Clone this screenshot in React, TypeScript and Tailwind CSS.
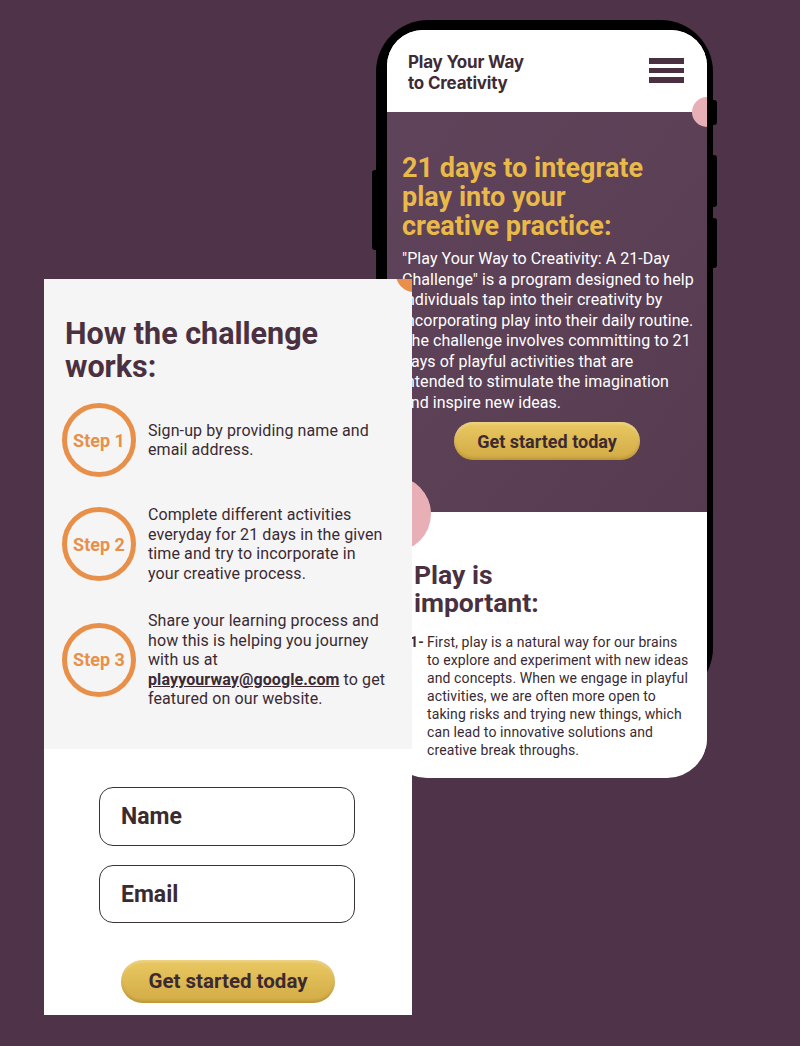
import { Fragment, useState } from 'react';

const steps = [
  {
    label: 'Step 1',
    text: <>Sign-up by providing name and email address.</>,
  },
  {
    label: 'Step 2',
    text: <>Complete different activities everyday for 21 days in the given time and try to incorporate in your creative process.</>,
  },
  {
    label: 'Step 3',
    text: (
      <>
        Share your learning process and how this is helping you journey with us at{' '}
        <span className="font-bold underline underline-offset-1">playyourway@google.com</span> to get featured on our website.
      </>
    ),
  },
];

// 按设计稿断行
const introLines = [
  '"Play Your Way to Creativity: A 21-Day',
  'Challenge" is a program designed to help',
  'individuals tap into their creativity by',
  'incorporating play into their daily routine.',
  'The challenge involves committing to 21',
  'days of playful activities that are',
  'intended to stimulate the imagination',
  'and inspire new ideas.',
];

const playLines = [
  'First, play is a natural way for our brains',
  'to explore and experiment with new ideas',
  'and concepts. When we engage in playful',
  'activities, we are often more open to',
  'taking risks and trying new things, which',
  'can lead to innovative solutions and',
  'creative break throughs.',
];

const withBreaks = (lines: string[]) =>
  lines.map((line, i) => (
    <Fragment key={i}>
      {line}
      {i < lines.length - 1 && <br />}
    </Fragment>
  ));

const CtaButton = ({ className }: { className: string }) => (
  <button
    className={`rounded-full bg-gradient-to-b from-[#e9c862] to-[#d2ab45] font-bold text-[#3d2a30] shadow-[inset_0_-2px_3px_rgba(120,80,10,0.25),inset_0_2px_3px_rgba(255,255,255,0.25)] ${className}`}
  >
    Get started today
  </button>
);

const App = () => {
  const [name, setName] = useState('');
  const [email, setEmail] = useState('');

  return (
    <div className="relative w-[800px] h-[1046px] overflow-hidden bg-[#4f3449] font-['Roboto',sans-serif]">
      {/* 手机外框 */}
      <div className="absolute left-[376px] top-[20px] w-[337px] h-[680px] rounded-[52px] bg-black" />
      <div className="absolute left-[372px] top-[170px] w-[6px] h-[80px] rounded-l-[3px] bg-black" />
      <div className="absolute left-[711px] top-[100px] w-[6px] h-[25px] rounded-r-[3px] bg-black" />
      <div className="absolute left-[711px] top-[155px] w-[6px] h-[52px] rounded-r-[3px] bg-black" />
      <div className="absolute left-[711px] top-[218px] w-[6px] h-[50px] rounded-r-[3px] bg-black" />

      {/* 手机屏幕 */}
      <div className="absolute left-[387px] top-[30px] w-[320px] h-[748px] overflow-hidden rounded-t-[36px] rounded-b-[40px] bg-white">
        <div className="flex h-[82px] items-start justify-between bg-white pl-[21px] pr-[23px] pt-[22px]">
          <div className="font-['Inter',sans-serif] text-[17px] font-bold leading-[21px] tracking-[-0.2px] text-[#3f2b36]">
            Play Your Way
            <br />
            to Creativity
          </div>
          <div className="mt-[6px] flex w-[35px] flex-col gap-[4px]">
            <span className="h-[6px] bg-[#4a3040]" />
            <span className="h-[5px] bg-[#4a3040]" />
            <span className="h-[6px] bg-[#4a3040]" />
          </div>
        </div>

        <div className="flex h-[400px] flex-col bg-gradient-to-br from-[#5f435a] via-[#5c4056] to-[#563b50] pl-[15px] pr-[6px] pt-[42px]">
          <h1 className="text-[27px] font-bold leading-[29px] text-[#e9b949]">
            21 days to integrate
            <br />
            play into your
            <br />
            creative practice:
          </h1>
          <p className="mt-[8px] whitespace-nowrap text-[16px] leading-[20.5px] tracking-[0.05px] text-white">
            {withBreaks(introLines)}
          </p>
          <div className="mt-[9px] flex justify-center pr-[9px]">
            <CtaButton className="h-[38px] w-[186px] text-[18px]" />
          </div>
        </div>

        <div className="bg-white pl-[27px] pr-[8px] pt-[49px]">
          <h2 className="text-[26.5px] font-bold leading-[28px] text-[#4a3040]">
            Play is
            <br />
            important:
          </h2>
          <div className="mt-[16px] flex text-[14px] leading-[18px] tracking-[0.1px] text-[#3a2a33]">
            <span className="ml-[-4px] w-[17px] shrink-0 font-bold">1-</span>
            <p className="whitespace-nowrap">{withBreaks(playLines)}</p>
          </div>
        </div>

        {/* 装饰圆点 */}
        <div className="absolute left-[305px] top-[67px] h-[30px] w-[30px] rounded-full bg-[#e8b0b6]" />
        <div className="absolute left-[-32px] top-[446px] h-[76px] w-[76px] rounded-full bg-[#e8b0b6]" />
      </div>

      {/* 挑战卡片 */}
      <div className="absolute left-[44px] top-[279px] w-[368px] h-[736px] overflow-hidden bg-white">
        <div className="absolute left-[352px] top-[-23px] h-[36px] w-[36px] rounded-full bg-[#e8904a]" />
        <div className="h-[470px] bg-[#f5f5f5] pl-[18px] pr-[23px] pt-[38px]">
          <h2 className="pl-[3px] text-[30.5px] font-bold leading-[33px] text-[#4a3040]">
            How the challenge
            <br />
            works:
          </h2>
          <div className="mt-[20px] flex flex-col gap-[28px]">
            {steps.map((step) => (
              <div key={step.label} className="flex items-center gap-[12px]">
                <div className="flex h-[74px] w-[74px] shrink-0 items-center justify-center rounded-full border-[5px] border-[#e8904a] text-[18px] font-bold text-[#e8904a]">
                  {step.label}
                </div>
                <p className="text-[16px] leading-[19.5px] tracking-[0.1px] text-[#3b2a33]">{step.text}</p>
              </div>
            ))}
          </div>
        </div>

        <div className="flex flex-col items-center pt-[38px]">
          <div className="flex flex-col gap-[19px] pr-[2px]">
            <input
              value={name}
              onChange={(e) => setName(e.target.value)}
              placeholder="Name"
              className="h-[59px] w-[256px] rounded-[14px] border-[1.5px] border-[#3a3236] bg-white px-[21px] text-[23px] font-bold text-[#3b2a30] outline-none placeholder:text-[#3b2a30]"
            />
            <input
              value={email}
              onChange={(e) => setEmail(e.target.value)}
              placeholder="Email"
              className="h-[58px] w-[256px] rounded-[14px] border-[1.5px] border-[#3a3236] bg-white px-[21px] text-[23px] font-bold text-[#3b2a30] outline-none placeholder:text-[#3b2a30]"
            />
          </div>
          <CtaButton className="mt-[37px] h-[43px] w-[214px] text-[20.5px]" />
        </div>
      </div>
    </div>
  );
};

export default App;
